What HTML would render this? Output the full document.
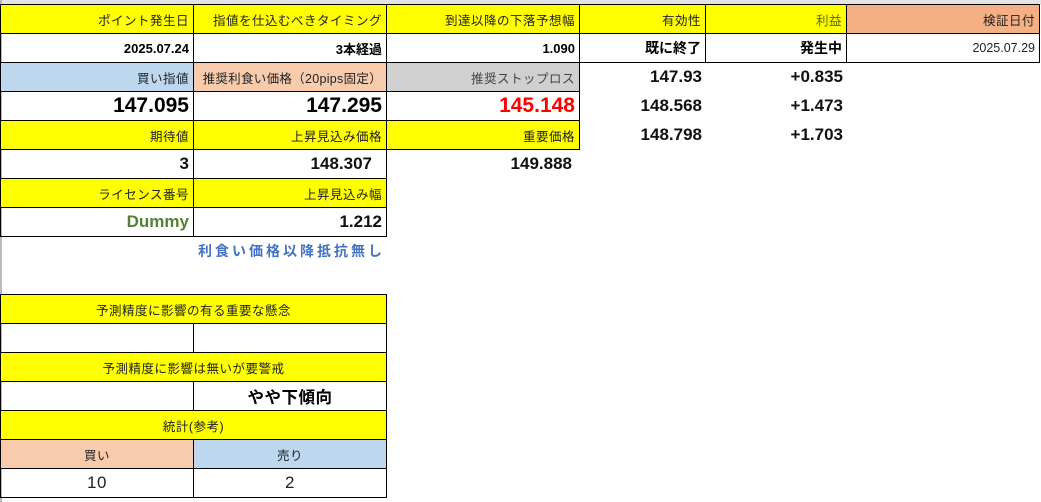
<!DOCTYPE html>
<html><head><meta charset="utf-8"><style>
body{margin:0;width:1041px;height:502px;background:#fff;position:relative;overflow:hidden;font-family:"Liberation Sans","Noto Sans CJK JP",sans-serif;}
.c{position:absolute;box-sizing:border-box;display:flex;align-items:center;justify-content:flex-end;padding-right:4px;font-size:12.5px;color:#222;white-space:nowrap;letter-spacing:0.5px;}
.b{border:1px solid #000;}
.y{background:#ffff00;}
.big{font-size:21px;font-weight:bold;color:#000;letter-spacing:0;}
.mid{font-size:17px;font-weight:bold;color:#111;letter-spacing:0;}
.bd{font-weight:bold;font-size:13px;color:#000;letter-spacing:0;}
.ctr{justify-content:center;padding:0;}
</style></head><body>
<div style="position:absolute;left:0;top:0;width:1041px;height:5px;background:#e4e4e4"></div>
<div style="position:absolute;left:0;top:0;width:2px;height:502px;background:#bbb"></div>
<!-- row1 -->
<div class="c b y" style="left:0;top:4px;width:194px;height:30px">ポイント発生日</div>
<div class="c b y" style="left:193px;top:4px;width:194px;height:30px">指値を仕込むべきタイミング</div>
<div class="c b y" style="left:386px;top:4px;width:194px;height:30px">到達以降の下落予想幅</div>
<div class="c b y" style="left:579px;top:4px;width:127px;height:30px">有効性</div>
<div class="c b y" style="left:705px;top:4px;width:142px;height:30px;color:#5a6b00">利益</div>
<div class="c b" style="left:846px;top:4px;width:194px;height:30px;background:#f4b084">検証日付</div>
<!-- row2 -->
<div class="c b bd" style="left:0;top:33px;width:194px;height:30px">2025.07.24</div>
<div class="c b bd" style="left:193px;top:33px;width:194px;height:30px">3本経過</div>
<div class="c b bd" style="left:386px;top:33px;width:194px;height:30px">1.090</div>
<div class="c b bd" style="left:579px;top:33px;width:127px;height:30px;font-size:14px">既に終了</div>
<div class="c b bd" style="left:705px;top:33px;width:142px;height:30px;font-size:14px">発生中</div>
<div class="c b" style="left:846px;top:33px;width:194px;height:30px;letter-spacing:0">2025.07.29</div>
<!-- row3 -->
<div class="c b" style="left:0;top:62px;width:194px;height:30px;background:#bdd7ee">買い指値</div>
<div class="c b" style="left:193px;top:62px;width:194px;height:30px;background:#f8cbad;letter-spacing:0.3px">推奨利食い価格（20pips固定）</div>
<div class="c b" style="left:386px;top:62px;width:194px;height:30px;background:#d0d0d0;color:#444">推奨ストップロス</div>
<div class="c mid" style="left:579px;top:62px;width:127px;height:30px">147.93</div>
<div class="c mid" style="left:705px;top:62px;width:142px;height:30px">+0.835</div>
<!-- row4 -->
<div class="c b big" style="left:0;top:91px;width:194px;height:30px">147.095</div>
<div class="c b big" style="left:193px;top:91px;width:194px;height:30px">147.295</div>
<div class="c b big" style="left:386px;top:91px;width:194px;height:30px;color:#ff0000">145.148</div>
<div class="c mid" style="left:579px;top:91px;width:127px;height:30px">148.568</div>
<div class="c mid" style="left:705px;top:91px;width:142px;height:30px">+1.473</div>
<!-- row5 -->
<div class="c b y" style="left:0;top:120px;width:194px;height:30px">期待値</div>
<div class="c b y" style="left:193px;top:120px;width:194px;height:30px">上昇見込み価格</div>
<div class="c b y" style="left:386px;top:120px;width:194px;height:30px">重要価格</div>
<div class="c mid" style="left:579px;top:120px;width:127px;height:30px">148.798</div>
<div class="c mid" style="left:705px;top:120px;width:142px;height:30px">+1.703</div>
<!-- row6 -->
<div class="c b mid" style="left:0;top:149px;width:194px;height:30px">3</div>
<div class="c b mid" style="left:193px;top:149px;width:194px;height:30px;padding-right:14px">148.307</div>
<div class="c mid" style="left:386px;top:149px;width:194px;height:30px;padding-right:8px">149.888</div>
<!-- row7 -->
<div class="c b y" style="left:0;top:178px;width:194px;height:30px">ライセンス番号</div>
<div class="c b y" style="left:193px;top:178px;width:194px;height:30px">上昇見込み幅</div>
<!-- row8 -->
<div class="c b mid" style="left:0;top:207px;width:194px;height:30px;color:#548235">Dummy</div>
<div class="c b mid" style="left:193px;top:207px;width:194px;height:30px">1.212</div>
<div class="c" style="left:193px;top:237px;width:194px;height:28px;font-weight:bold;font-size:14px;color:#4472c4;letter-spacing:3px;padding-right:2px">利食い価格以降抵抗無し</div>
<!-- bottom -->
<div class="c b y ctr" style="left:0;top:294px;width:387px;height:30px">予測精度に影響の有る重要な懸念</div>
<div class="c b" style="left:0;top:323px;width:194px;height:30px"></div>
<div class="c b" style="left:193px;top:323px;width:194px;height:30px"></div>
<div class="c b y ctr" style="left:0;top:352px;width:387px;height:30px">予測精度に影響は無いが要警戒</div>
<div class="c b" style="left:0;top:381px;width:194px;height:30px"></div>
<div class="c b ctr" style="left:193px;top:381px;width:194px;height:30px;font-size:16.5px;font-weight:bold;color:#000">やや下傾向</div>
<div class="c b y ctr" style="left:0;top:410px;width:387px;height:30px">統計(参考)</div>
<div class="c b ctr" style="left:0;top:439px;width:194px;height:30px;background:#f8cbad">買い</div>
<div class="c b ctr" style="left:193px;top:439px;width:194px;height:30px;background:#bdd7ee">売り</div>
<div class="c b ctr" style="left:0;top:468px;width:194px;height:30px;font-size:17px">10</div>
<div class="c b ctr" style="left:193px;top:468px;width:194px;height:30px;font-size:17px">2</div>
</body></html>
